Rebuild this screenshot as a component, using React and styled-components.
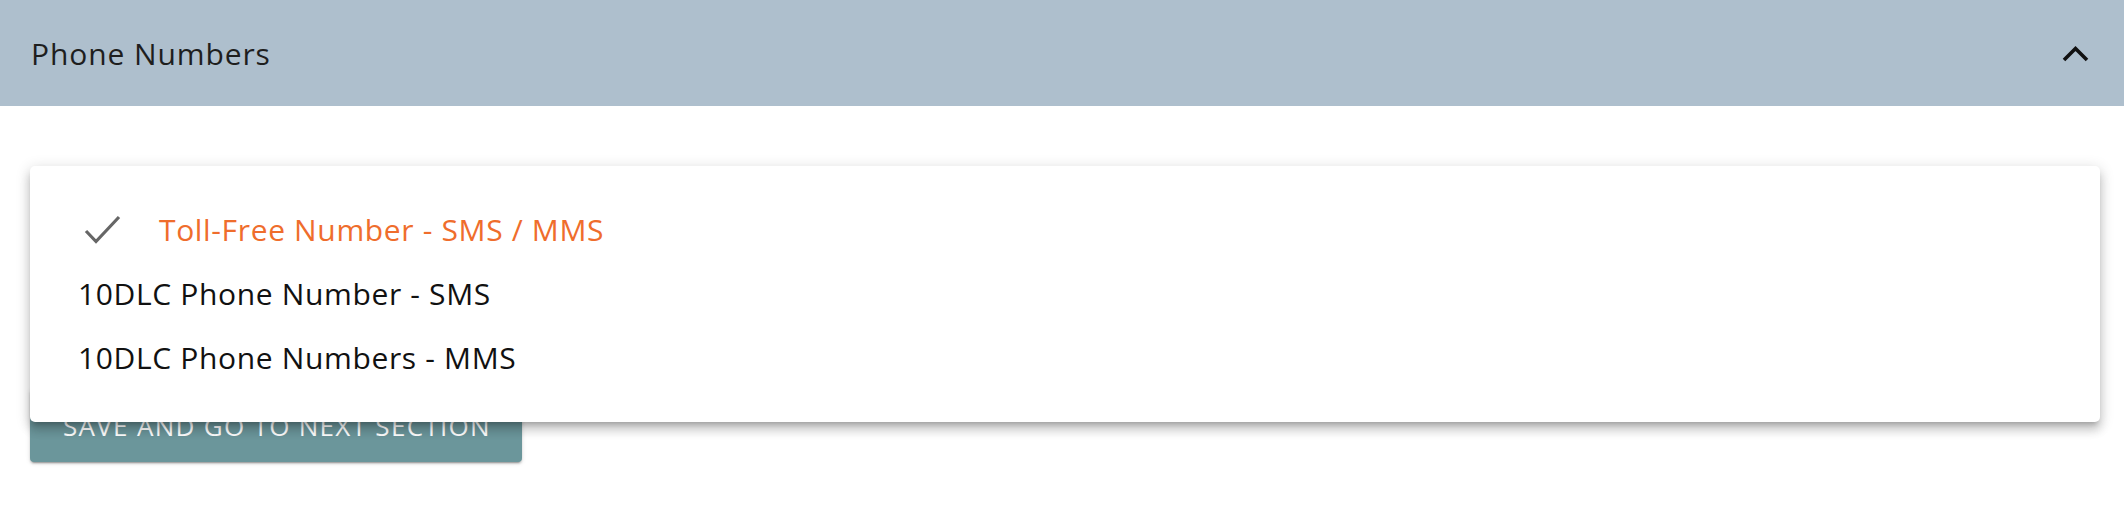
import React from 'react'
import styled, { createGlobalStyle } from 'styled-components'

const GlobalStyle = createGlobalStyle`
  html, body {
    margin: 0;
    padding: 0;
    background: #ffffff;
  }
  body {
    font-family: "Open Sans", "Liberation Sans", sans-serif;
  }
`

const options = [
  { id: 'tollfree', label: 'Toll-Free Number - SMS / MMS' },
  { id: '10dlc-sms', label: '10DLC Phone Number - SMS' },
  { id: '10dlc-mms', label: '10DLC Phone Numbers - MMS' },
]

const ChevronUp = () => (
  <svg width="29" height="21" viewBox="0 0 29 21">
    <polyline points="3,17 14.5,5.5 26,17" fill="none" stroke="#111" strokeWidth="3.6" />
  </svg>
)

const Check = () => (
  <svg width="38" height="30" viewBox="0 0 38 30">
    <polyline points="3,17 13,27.5 36,3" fill="none" stroke="#666" strokeWidth="3.2" />
  </svg>
)

const App = () => {
  const selected = 'tollfree'

  return (
    <StyledWrapper>
      <GlobalStyle />
      <section className="accordion">
        <Summary>
          <Title>Phone Numbers</Title>
          <ChevronUp />
        </Summary>

        <Details>
          <Field />
          <SaveButton>Save and go to next section</SaveButton>

          <Menu>
            {options.map(opt => (
              <MenuItem key={opt.id} $selected={opt.id === selected}>
                {opt.id === selected && (
                  <CheckSlot>
                    <Check />
                  </CheckSlot>
                )}
                {opt.label}
              </MenuItem>
            ))}
          </Menu>
        </Details>
      </section>
    </StyledWrapper>
  )
}

const StyledWrapper = styled.div`
  .accordion {
    background: #fff;
    box-shadow: 0 2px 2px -1px rgba(0, 0, 0, 0.06);
  }
`

const Summary = styled.div`
  display: flex;
  align-items: center;
  justify-content: space-between;
  height: 106px;
  padding: 0 34px 0 31px;
  box-sizing: border-box;
  background: #aebfcd;
`

const Title = styled.span`
  font-size: 30px;
  color: #1e1e1e;
  letter-spacing: 0.9px;
`

const Details = styled.div`
  position: relative;
  padding: 60px 30px 41px;
  display: flex;
  flex-direction: column;
  align-items: flex-start;
`

const Field = styled.div`
  width: 100%;
  height: 223px;
`

const SaveButton = styled.button`
  width: 492px;
  height: 73px;
  border: none;
  border-radius: 4px;
  background: #6b969b;
  color: #fff;
  font-family: "Open Sans", "Liberation Sans", sans-serif;
  font-size: 26px;
  text-transform: uppercase;
  text-align: left;
  letter-spacing: 1.3px;
  padding: 0 0 0 33px;
  box-shadow: 0 3px 1px -2px rgba(0, 0, 0, 0.2), 0 2px 2px 0 rgba(0, 0, 0, 0.14),
    0 1px 5px 0 rgba(0, 0, 0, 0.12);
`

const Menu = styled.ul`
  position: absolute;
  top: 60px;
  left: 30px;
  width: 2070px;
  margin: 0;
  padding: 31px 0 33px;
  list-style: none;
  background: #fff;
  border-radius: 5px;
  box-shadow: 0 5px 5px -3px rgba(0, 0, 0, 0.2), 0 8px 10px 1px rgba(0, 0, 0, 0.14),
    0 3px 14px 2px rgba(0, 0, 0, 0.12);
`

const MenuItem = styled.li`
  display: flex;
  align-items: center;
  height: 64px;
  padding-left: 48px;
  font-size: 30px;
  letter-spacing: 0.65px;
  color: ${p => (p.$selected ? '#ef6d2c' : '#111')};
`

const CheckSlot = styled.span`
  display: flex;
  align-items: center;
  width: 81px;
  padding-left: 5px;
  box-sizing: border-box;
`

export default App
